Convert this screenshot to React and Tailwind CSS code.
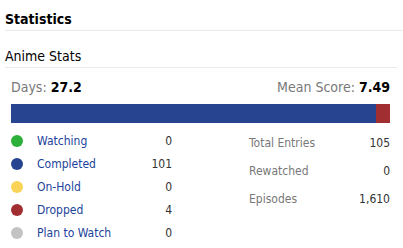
const statuses = [
  { label: 'Watching', value: '0', color: 'bg-[#2db039]' },
  { label: 'Completed', value: '101', color: 'bg-[#26448f]' },
  { label: 'On-Hold', value: '0', color: 'bg-[#f9d457]' },
  { label: 'Dropped', value: '4', color: 'bg-[#a12f31]' },
  { label: 'Plan to Watch', value: '0', color: 'bg-[#c3c3c3]' },
]

const totals = [
  { label: 'Total Entries', value: '105' },
  { label: 'Rewatched', value: '0' },
  { label: 'Episodes', value: '1,610' },
]

export default function App() {
  return (
    <div className="w-[403px] h-[248px] overflow-hidden bg-white pl-[5px] font-['DejaVu_Sans_Condensed','DejaVu_Sans',Tahoma,sans-serif] text-[#323232]">
      <h2 className="pt-[11px] pb-[3px] text-[14px] font-bold leading-[16px] text-black border-b border-[#ebebeb]">
        Statistics
      </h2>
      <div className="mr-[6px] mt-[17px] pb-[3px] text-[14px] leading-[16px] text-black border-b border-[#ebebeb]">
        Anime Stats
      </div>
      <div className="pl-[6px] pr-[13px] pt-[12px]">
        <div className="flex justify-between items-baseline text-[14px] leading-[15px] text-[#787878]">
          <span>Days: <span className="font-bold text-[14px] text-black">27.2</span></span>
          <span>Mean Score: <span className="font-bold text-[14px] text-black">7.49</span></span>
        </div>
        <div className="mt-[9px] flex h-[19px]">
          <div className="flex-1 bg-[#26448f]" />
          <div className="w-[14px] bg-[#a12f31]" />
        </div>
        <div className="mt-[6px] flex">
          <ul className="w-[161px] text-[12px] leading-[14px]">
            {statuses.map((s) => (
              <li key={s.label} className="flex items-center h-[23px]">
                <span className={`w-[12px] h-[12px] rounded-full ${s.color}`} />
                <span className="ml-[14px] flex-1 text-[#1c439b]">{s.label}</span>
                <span>{s.value}</span>
              </li>
            ))}
          </ul>
          <ul className="ml-auto w-[141px] text-[12px] leading-[14px]">
            {totals.map((t) => (
              <li key={t.label} className="flex items-center justify-between h-[28px]">
                <span className="text-[#787878]">{t.label}</span>
                <span>{t.value}</span>
              </li>
            ))}
          </ul>
        </div>
      </div>
    </div>
  )
}
